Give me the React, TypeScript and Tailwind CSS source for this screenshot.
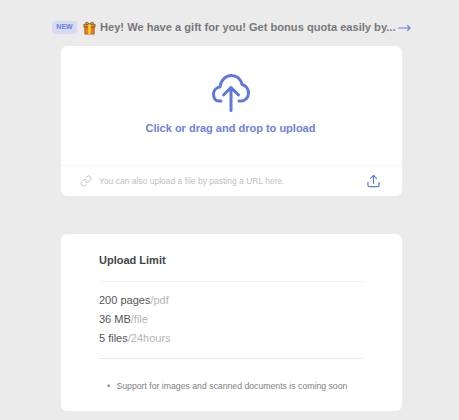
import { Link } from "lucide-react";

const Gift = () => (
  <svg viewBox="0 0 14 14" className="w-[13px] h-[14px] shrink-0">
    <path d="M7 3 C5 0 2 .5 3 2.5 L7 3 C9 0 12 .5 11 2.5 Z" fill="none" stroke="#7a4a14" strokeWidth="1" />
    <rect x="1" y="3" width="12" height="3" fill="#ea8a22" stroke="#7a4a14" strokeWidth=".7" />
    <rect x="2" y="6" width="10" height="7.5" fill="#ee7a1c" stroke="#7a4a14" strokeWidth=".7" />
    <rect x="5.6" y="3" width="2.8" height="10.5" fill="#f9d22e" />
  </svg>
);

const LongArrow = () => (
  <svg viewBox="0 0 14 8" className="w-[13px] h-2 shrink-0" fill="none" stroke="#6b7fdc" strokeWidth="1.3">
    <path d="M0 4 H13 M10 1 L13 4 L10 7" />
  </svg>
);

const CloudUpload = () => (
  <svg viewBox="0 0 38 38" className="w-[38px] h-[38px]" fill="none" stroke="#5f78dc" strokeWidth="3" strokeLinecap="round" strokeLinejoin="round">
    <path d="M9 27 H7 C3 27 1.5 23.5 1.5 20 C1.5 16 4.5 13.5 8 13 C8.5 7 13 1.5 19.5 1.5 C24.5 1.5 29 5 30 10.5 C34 11.5 36.5 15 36.5 19 C36.5 23.5 33 27 29 27 H27" />
    <path d="M19 36.5 V13.5 M11.5 21 L19 13.5 L26.5 21" />
  </svg>
);

const UploadTray = () => (
  <svg viewBox="0 0 14 14" className="w-[13px] h-[14px]" fill="none" stroke="#5f78dc" strokeWidth="1.3" strokeLinecap="round" strokeLinejoin="round">
    <path d="M7 9.5 V1 M3.8 4.2 L7 1 L10.2 4.2" />
    <path d="M1 8.5 V11.5 C1 12.5 1.5 13 2.5 13 H11.5 C12.5 13 13 12.5 13 11.5 V8.5" />
  </svg>
);

export default function App() {
  return (
    <div className="w-[459px] h-[420px] overflow-hidden bg-[#ebebeb] font-['Liberation_Sans',Arial,sans-serif] flex flex-col pl-[61px]">
      <div className="flex items-center h-[46px] pt-[9px] -ml-[9px]">
        <span className="w-[25px] h-[13px] rounded-[3px] bg-[#d6dbf4] text-[#6b7fdc] text-[7px] font-bold flex items-center justify-center">NEW</span>
        <span className="ml-[6px]"><Gift /></span>
        <span className="ml-[4px] text-[11.1px] font-bold text-[#77777c] whitespace-nowrap">Hey! We have a gift for you! Get bonus quota easily by...</span>
        <span className="ml-[3px]"><LongArrow /></span>
      </div>

      <div className="w-[341px] h-[150px] bg-white rounded-[6px] flex flex-col">
        <div className="h-[120px] flex flex-col items-center pt-[28px] pr-[2px] border-b border-[#f5f5f5]">
          <CloudUpload />
          <div className="mt-[8px] text-[11px] font-bold text-[#6b82de]">Click or drag and drop to upload</div>
        </div>
        <div className="flex-1 flex items-center pl-[19px] pr-[22px]">
          <Link className="w-[12px] h-[12px] text-[#b4b4b8]" strokeWidth={1.6} />
          <span className="ml-[7px] text-[8.5px] text-[#c0c0c6]">You can also upload a file by pasting a URL here.</span>
          <span className="ml-auto"><UploadTray /></span>
        </div>
      </div>

      <div className="mt-[38px] w-[341px] h-[177px] bg-white rounded-[6px] px-[38px] flex flex-col">
        <div className="h-[48px] pt-[6px] flex items-center border-b border-[#f3f3f3] text-[11px] font-bold text-[#444448]">Upload Limit</div>
        <div className="pt-[9px] pb-[10px] border-b border-[#e9e9e9] text-[11px] leading-[19px] text-[#555558]">
          <div>200 pages<span className="text-[#b4b4b8]">/pdf</span></div>
          <div>36 MB<span className="text-[#b4b4b8]">/file</span></div>
          <div>5 files<span className="text-[#b4b4b8]">/24hours</span></div>
        </div>
        <div className="mt-[21px] pl-[8px] text-[8.7px] text-[#808085] whitespace-nowrap">
          <span className="mr-[4px]">•</span> Support for images and scanned documents is coming soon
        </div>
      </div>
    </div>
  );
}
